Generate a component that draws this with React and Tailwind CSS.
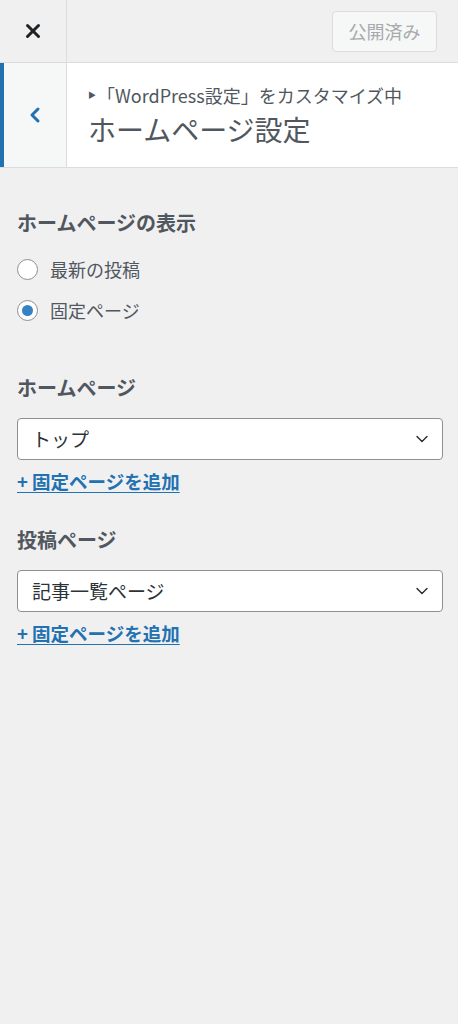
import { ChevronDown, ChevronLeft, X } from 'lucide-react';

const font = { fontFamily: '"Noto Sans CJK JP", "Noto Sans", sans-serif' };

function Radio({ label, checked }) {
  return (
    <label className="flex h-[41px] items-center gap-[12px]">
      <span className="flex h-[21px] w-[21px] items-center justify-center rounded-full border border-[#8c8f94] bg-white">
        {checked && <span className="h-[11px] w-[11px] rounded-full bg-[#3582c4]" />}
      </span>
      <span className="text-[18px] text-[#50575e]">{label}</span>
    </label>
  );
}

function SelectField({ title, value, className }) {
  return (
    <section className={className}>
      <h3 className="text-[20px] font-bold leading-[30px] text-[#50575e]">{title}</h3>
      <div className="mt-[15px] flex h-[42px] items-center justify-between rounded-[4px] border border-[#8c8f94] bg-white pl-[14px] pr-[10px]">
        <span className="text-[19px] text-[#2c3338]">{value}</span>
        <ChevronDown size={20} strokeWidth={1.8} className="text-[#2c3338]" />
      </div>
      <a className="mt-[8px] inline-block text-[18.5px] font-bold leading-[26px] text-[#2271b1] underline underline-offset-[3px]">
        + 固定ページを追加
      </a>
    </section>
  );
}

export default function App() {
  return (
    <div className="min-h-[1024px] w-full bg-[#f0f0f1]" style={font}>
      <div className="flex h-[63px] border-b border-[#dcdcde]">
        <div className="flex w-[67px] items-center justify-center border-r border-[#dcdcde]">
          <X size={22} strokeWidth={3.2} className="text-[#1d2327]" />
        </div>
        <div className="flex flex-1 items-center justify-end pr-[21px]">
          <div className="flex h-[41px] w-[105px] items-center justify-center rounded-[4px] border border-[#dcdcde] bg-[#f6f7f7] text-[18px] text-[#a7aaad]">
            公開済み
          </div>
        </div>
      </div>
      <div className="flex h-[105px] border-b border-[#dcdcde] bg-white">
        <div className="flex w-[67px] items-center justify-center border-l-[4px] border-r border-l-[#2271b1] border-r-[#dcdcde] bg-[#f6f7f7]">
          <ChevronLeft size={24} strokeWidth={3} className="text-[#2271b1]" />
        </div>
        <div className="flex flex-col justify-center pl-[21px] text-[#50575e]">
          <div className="flex items-center text-[18px] leading-[24px]">
            <span className="mr-[1px] text-[8px]">▶</span>
            「WordPress設定」をカスタマイズ中
          </div>
          <div className="mt-[4px] text-[28px] leading-[36px]">ホームページ設定</div>
        </div>
      </div>
      <div className="pl-[17px] pr-[15px] pt-[40px]">
        <section>
          <h3 className="text-[20px] font-bold leading-[30px] text-[#50575e]">ホームページの表示</h3>
          <div className="mt-[11px]">
            <Radio label="最新の投稿" />
            <Radio label="固定ページ" checked />
          </div>
        </section>
        <SelectField className="mt-[42px]" title="ホームページ" value="トップ" />
        <SelectField className="mt-[31px]" title="投稿ページ" value="記事一覧ページ" />
      </div>
    </div>
  );
}
